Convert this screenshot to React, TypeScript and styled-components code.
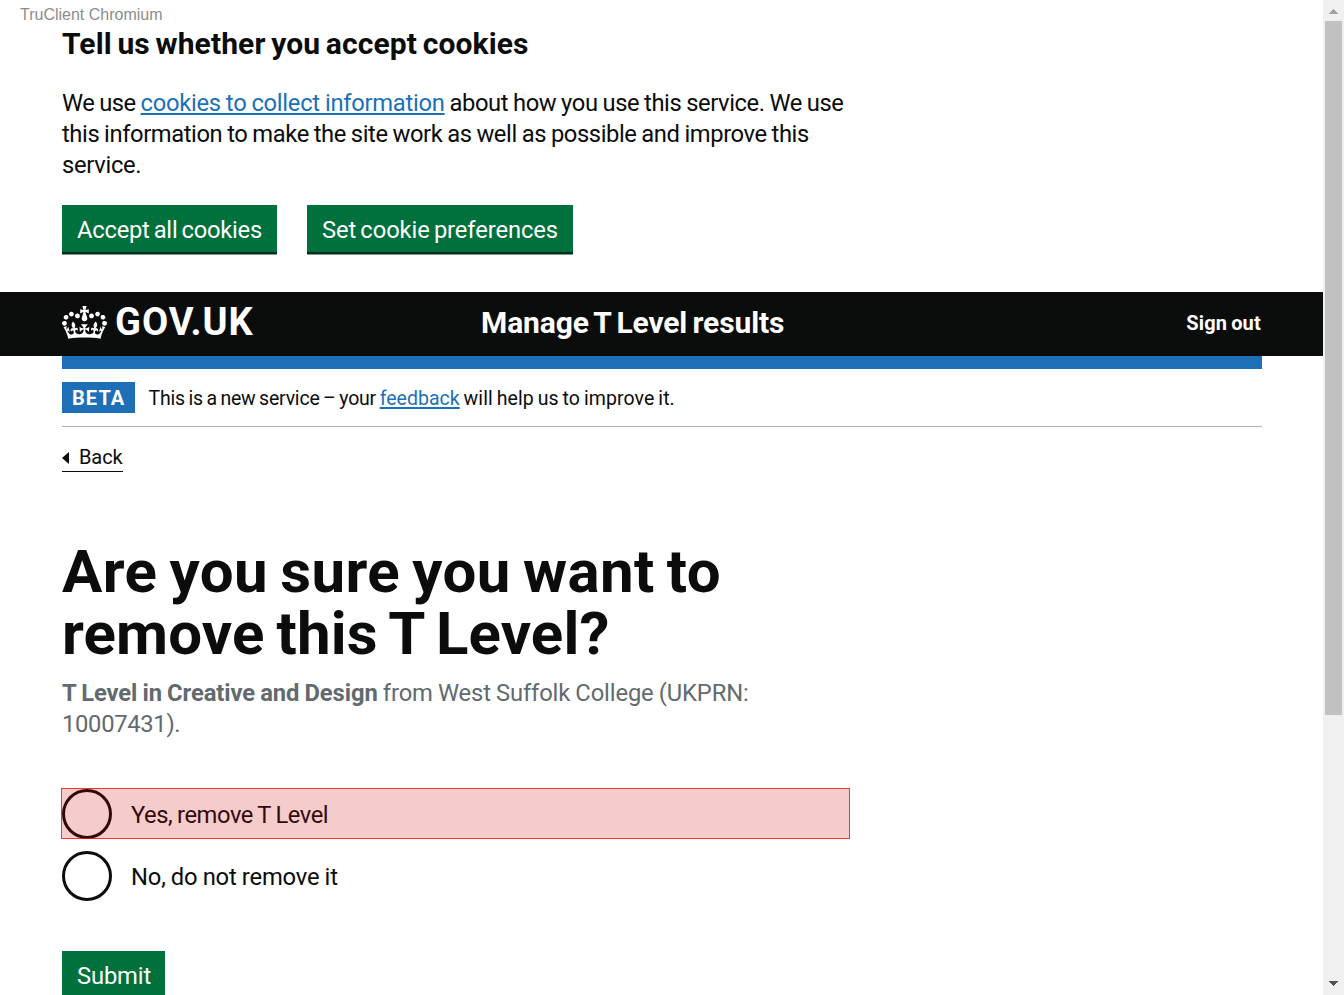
import React from 'react';
import styled, { createGlobalStyle } from 'styled-components';

const ink = '#0b0c0c';
const blue = '#1d70b8';
const green = '#00703c';

const Global = createGlobalStyle`
  * { box-sizing: border-box; }
  html, body { margin: 0; padding: 0; background: #fff; }
  body { height: 995px; overflow: hidden; color: ${ink}; font-family: Roboto, "Liberation Sans", sans-serif; }
  h1, h2, p { margin: 0; }
`;

const Window = styled.div`display: flex; width: 1344px; height: 995px; overflow: hidden;`;
const Page = styled.div`position: relative; width: 1323px; height: 995px; overflow: hidden;`;
const Watermark = styled.span`
  position: absolute; left: 20px; top: 6px; color: #8c8c8c;
  font: 16px/18px "Liberation Sans", Arial, sans-serif;
`;
const Container = styled.div`width: 1200px; margin: 0 auto 0 62px;`;

/* Run of text with its own tracking, in px */
const Run = styled.span<{ $ls: number }>`letter-spacing: ${p => p.$ls}px;`;
const Line = styled.span`display: block; white-space: nowrap;`;
const Link = styled.a<{ $ls: number }>`
  color: ${blue}; letter-spacing: ${p => p.$ls}px;
  text-decoration: underline; text-decoration-thickness: 2px; text-underline-offset: 2px;
  text-decoration-skip-ink: none;
`;

const CookieBanner = styled.section`height: 292px; padding-top: 25px;`;
const CookieTitle = styled.h2`font-size: 30px; line-height: 38px; word-spacing: -2px; letter-spacing: .13px;`;
const Body = styled.p`font-size: 23.75px; line-height: 31px; word-spacing: -.6px;`;
const CookieText = styled(Body)`margin-top: 25px;`;
const ButtonRow = styled.div`display: flex; gap: 30px; margin-top: 24px;`;
const Button = styled.button<{ $w: number; $ls: number }>`
  width: ${p => p.$w}px; height: 47px; padding: 2px 0 0 15px; border: 0; text-align: left; white-space: nowrap;
  background: ${green}; color: #fff; box-shadow: 0 2.5px 0 #002d18;
  font: 23.75px/24px Roboto, sans-serif; word-spacing: -1.6px; letter-spacing: ${p => p.$ls}px;
`;

const Header = styled.header`height: 64px; background: ${ink}; color: #fff; font-weight: 700;`;
const HeaderRow = styled(Container)`display: grid; grid-template-columns: 419px 1fr auto; align-items: center; height: 64px; padding-bottom: 2px;`;
const Logo = styled.div`
  display: flex; align-items: center; height: 62px; gap: 8px;
  font-size: 38px; line-height: 44px; letter-spacing: 1px;
`;
const LogoText = styled.span`padding-bottom: 2px;`;
const ServiceName = styled.div`font-size: 30px; line-height: 36px; word-spacing: -2px; letter-spacing: -.12px; padding-bottom: 1px;`;
const SignOut = styled.div`padding-right: 1px; font-size: 20px; line-height: 24px; word-spacing: -1.3px; letter-spacing: .2px;`;
const BlueBar = styled.div`height: 13px; background: ${blue};`;

const PhaseBanner = styled.div`
  display: flex; align-items: center; height: 58px; border-bottom: 1px solid #b1b4b6;
  font-size: 19.5px; word-spacing: -1px; white-space: pre;
`;
const PhaseText = styled.span`padding-top: 2px;`;
const Tag = styled.strong`
  display: block; width: 73px; height: 31px; padding-left: 10px; margin-right: 13.5px;
  background: ${blue}; color: #fff; font-size: 20px; line-height: 32px; letter-spacing: 1.1px;
`;
const Back = styled.a`
  display: flex; align-items: center; width: 61px; height: 27px; margin-top: 18px; gap: 10px;
  border-bottom: 1px solid ${ink}; font-size: 20px; line-height: 24px; letter-spacing: -.1px;
`;
const BackText = styled.span`padding-bottom: 2px;`;
const Arrow = styled.svg`display: block; width: 7px; height: 12px; flex: none;`;

const Title = styled.h1`margin-top: 69px; font-size: 60px; line-height: 62px; word-spacing: -3px;`;
const Lead = styled(Body)`margin-top: 13px; color: #626a6e;`;
const Radios = styled.div`display: flex; flex-direction: column; gap: 11px; margin-top: 48px; margin-left: -1px;`;
const Radio = styled.label<{ $marked?: boolean }>`
  position: relative; display: flex; align-items: center; width: 789px; height: 51px; padding-left: 1px; gap: 19px;
  font-size: 23.75px; line-height: 31px; word-spacing: -.6px;
  &::after {
    content: ""; position: absolute; inset: 0; display: ${p => (p.$marked ? 'block' : 'none')};
    border: 1px solid rgba(255, 0, 0, .75); background: rgba(204, 0, 0, .2);
  }
`;
const RadioText = styled(Run)`padding-top: 3px;`;
const Dot = styled.span`width: 50px; height: 50px; border: 3px solid ${ink}; border-radius: 50%; flex: none;`;
const SubmitRow = styled.div`margin-top: 50px;`;

const Scrollbar = styled.div`
  display: flex; flex-direction: column; align-items: center;
  width: 21px; height: 995px; background: #f0f0f0;
`;
const Thumb = styled.div`width: 17px; height: 694px; background: #c1c1c1; margin-bottom: auto;`;
const ScrollArrow = styled.svg`display: block; width: 21px; height: 21px; flex: none;`;

const CrownSvg = styled.svg`display: block; width: 45px; height: 33px; margin-bottom: 1px; flex: none;`;
const Crown = () => (
  <CrownSvg viewBox="0 0 132 97" fill="#fff" fillRule="evenodd" aria-hidden="true">
    <path d="M25 30.2c3.5 1.5 7.7-.2 9.1-3.7 1.5-3.6-.2-7.8-3.9-9.2-3.6-1.4-7.6.3-9.1 3.9-1.4 3.5.3 7.5 3.9 9zM9 39.5c3.6 1.5 7.8-.2 9.2-3.7 1.5-3.6-.2-7.8-3.9-9.1-3.6-1.5-7.6.2-9.1 3.8-1.4 3.5.3 7.5 3.8 9zM4.4 57.2c3.5 1.5 7.7-.2 9.1-3.8 1.5-3.6-.2-7.7-3.9-9.1-3.5-1.5-7.6.3-9.1 3.8-1.4 3.5.3 7.6 3.9 9.1zm38.3-21.4c3.5 1.5 7.7-.2 9.1-3.8 1.5-3.6-.2-7.7-3.9-9.1-3.6-1.5-7.6.3-9.1 3.8-1.3 3.6.4 7.7 3.9 9.1zm64.4-5.6c-3.6 1.5-7.8-.2-9.1-3.7-1.5-3.6.2-7.8 3.8-9.2 3.6-1.4 7.7.3 9.2 3.9 1.3 3.5-.4 7.5-3.9 9zm15.9 9.3c-3.6 1.5-7.7-.2-9.1-3.7-1.5-3.6.2-7.8 3.7-9.1 3.6-1.5 7.7.2 9.2 3.8 1.5 3.5-.3 7.5-3.8 9zm4.7 17.7c-3.6 1.5-7.8-.2-9.2-3.8-1.5-3.6.2-7.7 3.9-9.1 3.6-1.5 7.7.3 9.2 3.8 1.3 3.5-.4 7.6-3.9 9.1zM89.3 35.8c-3.6 1.5-7.8-.2-9.2-3.8-1.4-3.6.2-7.7 3.9-9.1 3.6-1.5 7.7.3 9.2 3.8 1.4 3.6-.3 7.7-3.9 9.1zM69.7 17.7l8.9 4.7V9.3l-8.9 2.8c-.2-.3-.5-.6-.9-.9L72.4 0H59.6l3.5 11.2c-.3.3-.6.5-.9.9l-8.8-2.8v13.1l8.8-4.7c.3.3.6.7.9.9l-5 15.4v.1c-.2.8-.4 1.6-.4 2.4 0 4.1 3.1 7.5 7 8.1h.2c.3 0 .7.1 1 .1.4 0 .7 0 1-.1h.2c4-.6 7.1-4.1 7.1-8.1 0-.8-.1-1.7-.4-2.4V34l-5.1-15.4c.4-.2.7-.6 1-.9zM66 92.8c16.9 0 32.8 1.1 47.1 3.2 4-16.9 8.9-26.7 14-33.5l-9.6-3.4c1 4.9 1.1 7.2 0 10.2-1.5-1.4-3-4.3-4.2-8.7L108.6 76c2.8-2 5-3.2 7.5-3.3-4.4 9.4-10 11.9-13.6 11.2-4.3-.8-6.3-4.6-5.6-7.9 1-4.7 5.7-5.9 8-.5 4.3-8.7-3-11.4-7.6-8.8 7.1-7.2 7.9-13.5 2.1-21.1-8 6.1-8.1 12.3-4.5 20.8-4.7-5.4-12.1-2.5-9.5 6.2 3.4-5.2 7.9-2 7.2 3.1-.6 4.3-6.4 7.8-13.5 7.2-10.3-.9-10.9-8-11.2-13.8 2.5-.5 7.1 1.8 11 7.3L80.2 60c-4.1 4.4-8 5.3-12.3 5.4 1.4-4.4 8-11.6 8-11.6H55.5s6.4 7.2 7.9 11.6c-4.2-.1-8-1-12.3-5.4l1.4 16.4c3.9-5.5 8.5-7.7 10.9-7.3-.3 5.8-.9 12.8-11.1 13.8-7.2.6-12.9-2.9-13.5-7.2-.7-5 3.8-8.3 7.1-3.1 2.7-8.7-4.6-11.6-9.4-6.2 3.7-8.5 3.6-14.7-4.6-20.8-5.8 7.6-5 13.9 2.2 21.1-4.7-2.6-11.9.1-7.7 8.8 2.3-5.5 7.1-4.2 8.1.5.7 3.3-1.3 7.1-5.7 7.9-3.5.7-9-1.8-13.5-11.2 2.5.1 4.7 1.3 7.5 3.3l-4.7-15.4c-1.2 4.4-2.7 7.2-4.3 8.7-1.1-3-.9-5.3 0-10.2l-9.5 3.4c5 6.9 9.9 16.7 14 33.5 14.8-2.1 30.8-3.2 47.7-3.2z" />
  </CrownSvg>
);

export default function App() {
  return (
    <Window>
      <Global />
      <Page>
        <Watermark>TruClient Chromium</Watermark>
        <Container>
          <CookieBanner>
            <CookieTitle>Tell us whether you accept cookies</CookieTitle>
            <CookieText>
              <Line><Run $ls={-0.47}>We use </Run><Link $ls={-0.27}>cookies to collect information</Link><Run $ls={-0.41}> about how you use this service. We use</Run></Line>
              <Line><Run $ls={-0.41}>this information to make the site work as well as possible and improve this</Run></Line>
              <Line><Run $ls={-0.3}>service.</Run></Line>
            </CookieText>
            <ButtonRow>
              <Button $w={215} $ls={-0.24}>Accept all cookies</Button>
              <Button $w={266} $ls={-0.1}>Set cookie preferences</Button>
            </ButtonRow>
          </CookieBanner>
        </Container>
        <Header>
          <HeaderRow>
            <Logo><Crown /><LogoText>GOV.UK</LogoText></Logo>
            <ServiceName>Manage T Level results</ServiceName>
            <SignOut>Sign out</SignOut>
          </HeaderRow>
        </Header>
        <Container>
          <BlueBar />
          <PhaseBanner>
            <Tag>BETA</Tag>
            <PhaseText><Run $ls={-0.22}>This is a new service – your </Run><Link $ls={0.02}>feedback</Link><Run $ls={0.08}> will help us to improve it.</Run></PhaseText>
          </PhaseBanner>
          <Back>
            <Arrow viewBox="0 0 7 12"><path d="M0 6 7 0v12z" fill={ink} /></Arrow>
            <BackText>Back</BackText>
          </Back>
          <Title>
            <Line><Run $ls={0.38}>Are you sure you want to</Run></Line>
            <Line><Run $ls={0.14}>remove this T Level?</Run></Line>
          </Title>
          <Lead>
            <Line><Run as="strong" $ls={-0.09}>T Level in Creative and Design</Run><Run $ls={-0.12}> from West Suffolk College (UKPRN:</Run></Line>
            <Line><Run $ls={-0.3}>10007431).</Run></Line>
          </Lead>
          <Radios>
            <Radio $marked><Dot /><RadioText $ls={-0.45}>Yes, remove T Level</RadioText></Radio>
            <Radio><Dot /><RadioText $ls={-0.15}>No, do not remove it</RadioText></Radio>
          </Radios>
          <SubmitRow><Button $w={103} $ls={-0.15}>Submit</Button></SubmitRow>
        </Container>
      </Page>
      <Scrollbar>
        <ScrollArrow viewBox="0 0 21 21" shapeRendering="crispEdges"><path d="M6 14 10.5 9 15 14z" fill="#a3a3a3" /></ScrollArrow>
        <Thumb />
        <ScrollArrow viewBox="0 0 21 21" shapeRendering="crispEdges"><path d="M6 7h9l-4.500 5z" fill="#505050" /></ScrollArrow>
      </Scrollbar>
    </Window>
  );
}
